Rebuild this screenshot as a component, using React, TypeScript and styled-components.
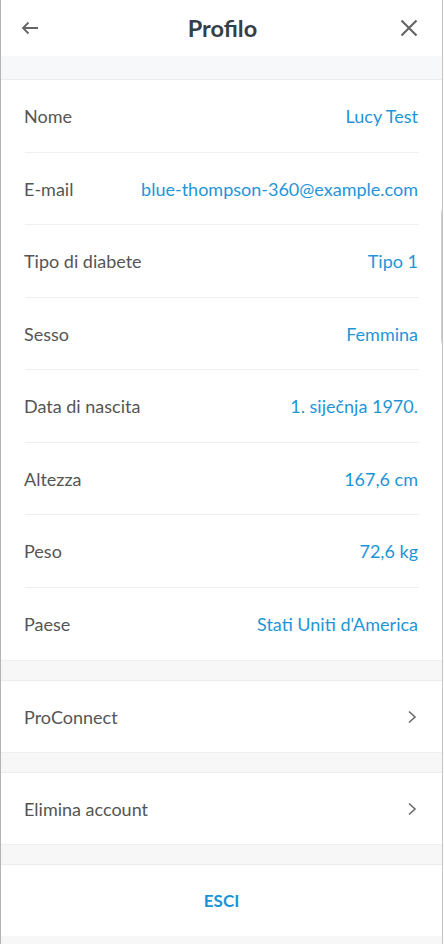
import React from "react";
import styled, { createGlobalStyle } from "styled-components";

const Global = createGlobalStyle`
  html, body { margin: 0; padding: 0; background: #ffffff; }
  body { font-family: Lato, "Open Sans", Arial, sans-serif; -webkit-font-smoothing: antialiased; }
  * { box-sizing: border-box; }
`;

const Modal = styled.div`
  position: relative;
  width: 443px;
  height: 944px;
  background: #f7f7f7;
  border-left: 1px solid #b4b4b4;
  border-right: 1px solid #c4c4c4;
  display: flex;
  flex-direction: column;
  overflow: hidden;
`;

const Header = styled.header`
  height: 56px;
  flex: none;
  background: #ffffff;
  display: grid;
  grid-template-columns: 56px 1fr 56px;
  align-items: center;
`;

const IconButton = styled.button<{ $align: "left" | "right" }>`
  border: 0;
  background: none;
  padding: 0;
  height: 56px;
  display: flex;
  align-items: center;
  justify-content: ${(p) => (p.$align === "left" ? "flex-start" : "flex-end")};
  padding-left: ${(p) => (p.$align === "left" ? "20px" : "0")};
  padding-right: ${(p) => (p.$align === "right" ? "24px" : "0")};
  color: #666666;
`;

const Title = styled.h1`
  margin: 0;
  text-align: center;
  font-family: Lato, sans-serif;
  font-weight: 700;
  font-size: 23.5px;
  color: #353f47;
  padding-left: 2px;
`;

const Band = styled.div<{ $h: number; $tint?: boolean }>`
  flex: none;
  height: ${(p) => p.$h}px;
  background: ${(p) => (p.$tint ? "#f7f8f9" : "#f7f7f7")};
  border-top: ${(p) => (p.$tint ? "0" : "1px solid #efefef")};
  border-bottom: 1px solid #ececec;
`;

const Section = styled.section`
  flex: none;
  background: #ffffff;
  display: flex;
  flex-direction: column;
`;

const Row = styled.div<{ $h: number; $divider?: boolean }>`
  position: relative;
  height: ${(p) => p.$h}px;
  padding: 0 24px 0 23px;
  display: flex;
  align-items: center;
  justify-content: space-between;
  &::after {
    content: "";
    display: ${(p) => (p.$divider ? "block" : "none")};
    position: absolute;
    left: 24px;
    right: 23px;
    bottom: 0;
    height: 1px;
    background: #efefef;
  }
`;

const Label = styled.span`
  font-family: Lato, sans-serif;
  font-size: 18px;
  color: #555555;
`;

const Value = styled.span`
  font-family: Lato, sans-serif;
  font-size: 18px;
  color: #1f95d8;
`;

const Chevron = styled.svg`
  width: 10px;
  height: 14px;
  margin-right: 1px;
`;

const Action = styled.button`
  width: 100%;
  height: 71px;
  border: 0;
  background: #ffffff;
  font-family: Lato, sans-serif;
  font-weight: 700;
  font-size: 17px;
  color: #1a92d6;
`;

const Filler = styled.div`
  flex: 1;
  background: #f7f7f7;
`;

const ScrollGhost = styled.div`
  position: absolute;
  right: -6px;
  top: 208px;
  width: 7px;
  height: 137px;
  border: 1px solid #cfcfcf;
  border-radius: 4px;
  background: #ffffff;
`;

const fields: [string, string][] = [
  ["Nome", "Lucy Test"],
  ["E-mail", "blue-thompson-360@example.com"],
  ["Tipo di diabete", "Tipo 1"],
  ["Sesso", "Femmina"],
  ["Data di nascita", "1. siječnja 1970."],
  ["Altezza", "167,6 cm"],
  ["Peso", "72,6 kg"],
  ["Paese", "Stati Uniti d'America"],
];

const ChevronIcon = () => (
  <Chevron viewBox="0 0 10 14">
    <polyline points="2,1.5 8,7 2,12.5" fill="none" stroke="#6b6b6b" strokeWidth="1.6" />
  </Chevron>
);

export default function App() {
  return (
    <>
      <Global />
      <Modal>
        <Header>
          <IconButton $align="left" aria-label="Indietro">
            <svg width="18" height="14" viewBox="0 0 18 14">
              <path d="M17 7H2M7.5 1.5L2 7l5.5 5.5" fill="none" stroke="#666" strokeWidth="1.8" />
            </svg>
          </IconButton>
          <Title>Profilo</Title>
          <IconButton $align="right" aria-label="Chiudi">
            <svg width="18" height="18" viewBox="0 0 18 18">
              <path d="M1.5 1.5l15 15M16.5 1.5l-15 15" fill="none" stroke="#666" strokeWidth="2.2" />
            </svg>
          </IconButton>
        </Header>
        <Band $h={24} $tint />
        <Section>
          {fields.map(([k, v], i) => (
            <Row key={k} $h={72.5} $divider={i < fields.length - 1}>
              <Label>{k}</Label>
              <Value>{v}</Value>
            </Row>
          ))}
        </Section>
        <Band $h={21} />
        <Section>
          <Row $h={71}>
            <Label>ProConnect</Label>
            <ChevronIcon />
          </Row>
        </Section>
        <Band $h={21} />
        <Section>
          <Row $h={71}>
            <Label>Elimina account</Label>
            <ChevronIcon />
          </Row>
        </Section>
        <Band $h={21} />
        <Section>
          <Action>ESCI</Action>
        </Section>
        <Filler />
        <ScrollGhost />
      </Modal>
    </>
  );
}
